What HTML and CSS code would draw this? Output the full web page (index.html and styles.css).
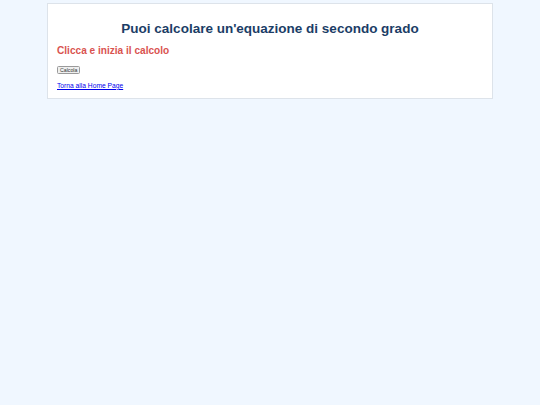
FILE: index.html
```html
<!DOCTYPE html>
<html lang="it">
<head>
<meta charset="utf-8">
<title>Equazione di secondo grado</title>
<link rel="stylesheet" href="styles.css">
</head>
<body>
<div class="card">
  <h1 class="title">Puoi calcolare un'equazione di secondo grado</h1>
  <h2 class="subtitle">Clicca e inizia il calcolo</h2>
  <div class="actions"><button class="btn" type="button">Calcola</button></div>
  <p class="back"><a href="#">Torna alla Home Page</a></p>
</div>
</body>
</html>
```
FILE: styles.css
```css
html, body {
  margin: 0;
  padding: 0;
}
body {
  background: #f0f7ff;
  font-family: "Liberation Sans", Arial, sans-serif;
  width: 540px;
  height: 405px;
}
.card {
  box-sizing: border-box;
  width: 446px;
  margin: 3px 0 0 47px;
  background: #ffffff;
  border: 1px solid #dde3ea;
  padding: 0 9px 8.5px;
}
.title {
  margin: 16.8px 0 0;
  font-size: 13.5px;
  line-height: 15px;
  font-weight: bold;
  color: #1b3d66;
  text-align: center;
}
.subtitle {
  margin: 9.7px 0 0;
  font-size: 10.1px;
  line-height: 11.6px;
  font-weight: bold;
  color: #d9534f;
}
.actions {
  margin-top: 9px;
  line-height: 0;
}
.btn {
  font-family: "Liberation Sans", Arial, sans-serif;
  font-size: 5.2px;
  line-height: 5px;
  padding: 0.5px 2px;
  margin: 0;
  color: #333;
  background: #efefef;
  border: 1px solid #9a9a9a;
  border-radius: 1.5px;
}
.back {
  margin: 7.8px 0 0;
  font-size: 6.7px;
  line-height: 7.5px;
}
.back a {
  color: #0000ee;
  text-decoration: underline;
}
```
